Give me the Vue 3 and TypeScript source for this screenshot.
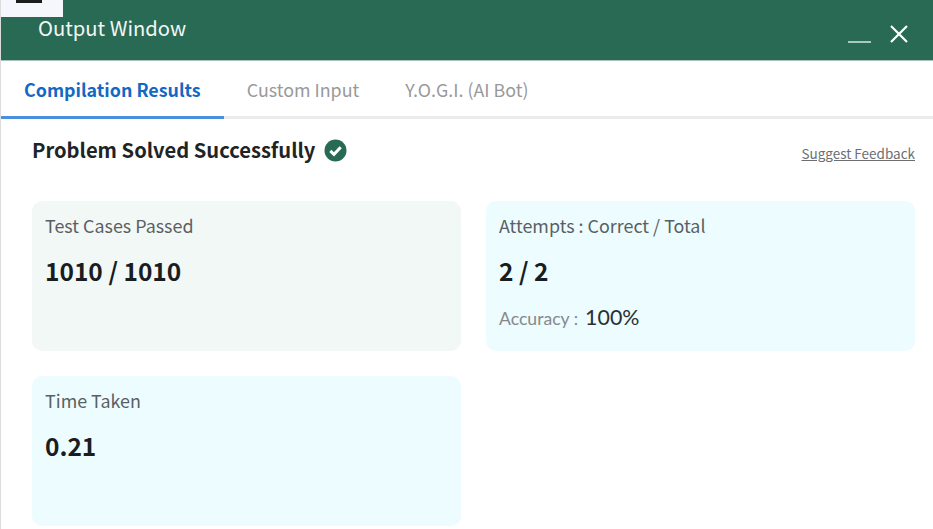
<script setup lang="ts">
interface Stat {
  label: string;
  value: string;
  tint: string;
  accuracy?: string;
}

const tabs = ['Compilation Results', 'Custom Input', 'Y.O.G.I. (AI Bot)'];

const stats: Stat[] = [
  { label: 'Test Cases Passed', value: '1010 / 1010', tint: 'grey' },
  { label: 'Attempts : Correct / Total', value: '2 / 2', tint: 'blue', accuracy: '100%' },
  { label: 'Time Taken', value: '0.21', tint: 'blue' },
];
</script>

<template>
  <div class="output">
    <div class="menuCorner"><span class="menuBar"></span></div>
    <header class="titleBar">
      <span class="title">Output Window</span>
      <div class="windowBtns">
        <span class="minimize"></span>
        <svg class="close" width="20" height="20" viewBox="0 0 20 20">
          <path d="M2 2 L18 18 M18 2 L2 18" stroke="#fff" stroke-width="2.2" fill="none" />
        </svg>
      </div>
    </header>

    <nav class="tabs">
      <span
        v-for="(tab, i) in tabs"
        :key="tab"
        class="tab"
        :class="{ active: i === 0 }"
      >{{ tab }}</span>
    </nav>

    <main class="body">
      <div class="resultRow">
        <h2 class="result">
          Problem Solved Successfully
          <svg width="23" height="23" viewBox="0 0 23 23">
            <circle cx="11.5" cy="11.5" r="11" fill="#296a55" />
            <path d="M6.3 11.8 L10 15.3 L16.7 8.3" stroke="#fff" stroke-width="3" fill="none" />
          </svg>
        </h2>
        <a class="feedback">Suggest Feedback</a>
      </div>

      <div class="cards">
        <div v-for="stat in stats" :key="stat.label" class="card" :class="stat.tint">
          <div class="label">{{ stat.label }}</div>
          <div class="value">{{ stat.value }}</div>
          <div v-if="stat.accuracy" class="accuracy">
            <span class="accLabel">Accuracy :</span>
            <span class="accValue">{{ stat.accuracy }}</span>
          </div>
        </div>
      </div>
    </main>
  </div>
</template>

<style>
html,
body {
  margin: 0;
  background: #fff;
  overflow: hidden;
}
</style>

<style scoped>
.output {
  position: relative;
  width: 933px;
  height: 529px;
  box-sizing: border-box;
  border-left: 1px solid #dcdcdc;
  font-family: "Noto Sans CJK SC", "Noto Sans", sans-serif;
  overflow: hidden;
}
.menuCorner {
  position: absolute;
  left: -1px;
  top: 0;
  width: 63px;
  height: 17px;
  background: #f5f7fc;
}
.menuBar {
  position: absolute;
  left: 16px;
  top: 0;
  width: 26px;
  height: 3px;
  background: #1c1c1c;
}
.titleBar {
  height: 60px;
  background: #296a55;
  border-bottom: 1px solid #a9c4bb;
  display: flex;
  justify-content: space-between;
  padding: 0 24px 0 37px;
}
.title {
  color: #f2f7f5;
  font-size: 20.2px;
  line-height: 26px;
  margin-top: 15px;
}
.windowBtns {
  display: flex;
  align-items: flex-start;
  gap: 18px;
}
.minimize {
  width: 23px;
  height: 2px;
  background: #a9c9be;
  margin-top: 41px;
}
.close {
  margin-top: 24px;
}
.tabs {
  display: flex;
  height: 55px;
  border-bottom: 3px solid #e9ebec;
}
.tab {
  font-size: 17.85px;
  line-height: 24px;
  color: #999;
  padding: 16px 23px 0;
  margin-bottom: -3px;
}
.tab.active {
  color: #1268c4;
  font-weight: 700;
  border-bottom: 3px solid #4a90dc;
}
.body {
  padding: 0 18px 0 31px;
}
.resultRow {
  display: flex;
  justify-content: space-between;
  align-items: flex-start;
  padding-top: 18px;
}
.result {
  display: flex;
  align-items: center;
  gap: 9px;
  margin: 0;
  font-size: 20.15px;
  line-height: 26px;
  font-weight: 700;
  color: #1f2426;
}
.feedback {
  font-size: 13.5px;
  line-height: 20px;
  color: #6b6f72;
  text-decoration: underline;
  margin-top: 6px;
}
.cards {
  display: grid;
  grid-template-columns: 429px 429px;
  grid-auto-rows: 150px;
  gap: 25px;
  margin-top: 38px;
}
.card {
  border-radius: 10px;
  padding: 12px 13px 0;
}
.card.grey {
  background: #f2f8f6;
}
.card.blue {
  background: #ecfcff;
}
.label {
  font-size: 17.9px;
  line-height: 24px;
  color: #5a5f62;
}
.value {
  font-size: 24.5px;
  line-height: 32px;
  font-weight: 700;
  color: #1a1d1f;
  margin-top: 18px;
}
.accuracy {
  display: flex;
  align-items: baseline;
  gap: 7px;
  margin-top: 18px;
  font-family: Lato, "Noto Sans", sans-serif;
}
.accLabel {
  font-size: 17.6px;
  line-height: 24px;
  color: #85898c;
}
.accValue {
  font-size: 21.4px;
  line-height: 24px;
  color: #2b2f31;
}
</style>
